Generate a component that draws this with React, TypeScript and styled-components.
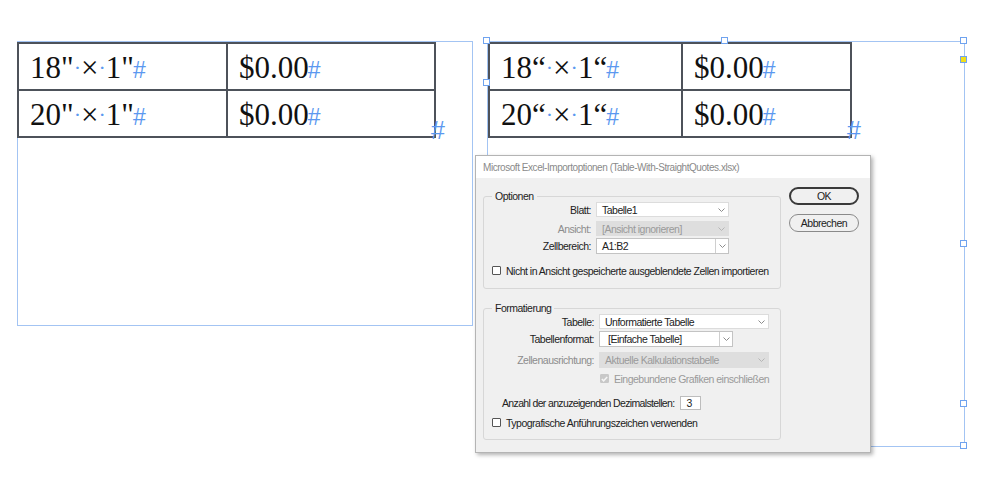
import React from "react";
import styled, { createGlobalStyle, css } from "styled-components";

const GlobalStyle = createGlobalStyle`
  html, body { margin: 0; padding: 0; background: #ffffff; }
  #root { width: 999px; height: 500px; }
`;

const Canvas = styled.div`
  position: relative;
  width: 999px;
  height: 500px;
  overflow: hidden;
  background: #ffffff;
`;

const Frame = styled.div<{ $x: number; $y: number; $w: number; $h: number }>`
  position: absolute;
  left: ${(p) => p.$x}px;
  top: ${(p) => p.$y}px;
  width: ${(p) => p.$w}px;
  height: ${(p) => p.$h}px;
  box-sizing: border-box;
  border: 1px solid #a3c4f3;
`;

const Handle = styled.div<{ $x: number; $y: number; $yellow?: boolean }>`
  position: absolute;
  left: ${(p) => p.$x - 4}px;
  top: ${(p) => p.$y - 4}px;
  width: 7px;
  height: 7px;
  box-sizing: border-box;
  border: 1px solid #6fa3ef;
  background: ${(p) => (p.$yellow ? "#f2df1a" : "#ffffff")};
  z-index: 2;
`;

const CellTable = styled.table<{ $shift?: boolean }>`
  border-collapse: collapse;
  border: 2px solid #4d525a;
  margin: ${(p) => (p.$shift ? "0 0 0 -1px" : "0")};
  font-family: "Liberation Serif", "Times New Roman", serif;
  font-size: 31px;
  color: #111;
`;

const Cell = styled.td<{ $w: number }>`
  width: ${(p) => p.$w}px;
  height: 47px;
  box-sizing: border-box;
  border: 2px solid #4d525a;
  padding: 6px 0 0 11px;
  vertical-align: top;
  line-height: 36px;
  white-space: nowrap;
`;

const Dot = styled.span`
  color: #5b98f0;
  font-size: 22px;
  vertical-align: 3px;
`;

const Mark = styled.span`
  font-family: "Liberation Sans", Arial, sans-serif;
  font-size: 23px;
  color: #5b98f0;
  margin-left: -1px;
`;

const StoryEnd = styled.span<{ $x: number; $y: number }>`
  position: absolute;
  left: ${(p) => p.$x}px;
  top: ${(p) => p.$y}px;
  font-family: "Liberation Sans", Arial, sans-serif;
  font-size: 25px;
  line-height: 25px;
  color: #5b98f0;
`;

/* ---------- Dialog ---------- */

const Dialog = styled.div`
  position: absolute;
  left: 475px;
  top: 155px;
  width: 396px;
  height: 298px;
  box-sizing: border-box;
  border: 1px solid #b4b4b4;
  background: #f0f0f0;
  box-shadow: 2px 2px 4px rgba(0, 0, 0, 0.3);
  font-family: "Liberation Sans", Arial, sans-serif;
  font-size: 10.5px;
  letter-spacing: -0.5px;
  color: #222222;
  z-index: 3;
`;

const TitleBar = styled.div`
  height: 22px;
  background: #ffffff;
  color: #8a8a8a;
  display: flex;
  align-items: center;
  padding-left: 7px;
  font-size: 10px;
  letter-spacing: -0.45px;
`;

const Body = styled.div`
  display: flex;
  align-items: flex-start;
  gap: 8px;
  padding: 12px 10px 0 7px;
`;

const Groups = styled.div`
  display: flex;
  flex-direction: column;
  gap: 13px;
  width: 298px;
`;

const Group = styled.fieldset`
  margin: 0;
  padding: 0 8px 0 8px;
  border: 1px solid #d7d7d7;
  border-radius: 3px;
  min-width: 0;
`;

const Legend = styled.legend`
  padding: 0 3px;
  line-height: 12px;
  color: #222;
`;

const Spacer = styled.div<{ $h: number }>`
  height: ${(p) => p.$h}px;
`;

const FormRow = styled.div<{ $label: number; $top: number; $h: number }>`
  display: grid;
  grid-template-columns: ${(p) => p.$label}px auto;
  column-gap: 5px;
  align-items: center;
  margin-top: ${(p) => p.$top}px;
  height: ${(p) => p.$h}px;
`;

const Label = styled.span<{ $disabled?: boolean }>`
  text-align: right;
  white-space: nowrap;
  color: ${(p) => (p.$disabled ? "#8c8c8c" : "#222")};
`;

const Select = styled.div<{ $w: number; $h: number; $disabled?: boolean; $combo?: boolean }>`
  width: ${(p) => p.$w}px;
  height: ${(p) => p.$h}px;
  box-sizing: border-box;
  display: flex;
  align-items: center;
  padding-left: 5px;
  white-space: nowrap;
  ${(p) =>
    p.$disabled
      ? css`
          background: #dedede;
          border: 1px solid #dedede;
          color: #9a9a9a;
        `
      : css`
          background: #ffffff;
          border: 1px solid ${p.$combo ? "#c3c3c3" : "#dcdcdc"};
          color: #222;
        `}
`;

const SelectText = styled.span<{ $pad?: number }>`
  flex: 1;
  padding-left: ${(p) => p.$pad ?? 0}px;
`;

const Arrow = styled.span<{ $divider?: boolean }>`
  width: 13px;
  height: 100%;
  display: flex;
  align-items: center;
  justify-content: center;
  box-sizing: border-box;
  border-left: ${(p) => (p.$divider ? "1px solid #cfcfcf" : "none")};
`;

const CheckRow = styled.div<{ $top: number; $indent: number; $disabled?: boolean }>`
  display: flex;
  align-items: center;
  gap: 5px;
  margin-top: ${(p) => p.$top}px;
  padding-left: ${(p) => p.$indent}px;
  height: 13px;
  white-space: nowrap;
  color: ${(p) => (p.$disabled ? "#9a9a9a" : "#222")};
`;

const Box = styled.span<{ $checked?: boolean }>`
  width: 9px;
  height: 9px;
  box-sizing: border-box;
  border-radius: 1px;
  display: flex;
  align-items: center;
  justify-content: center;
  ${(p) =>
    p.$checked
      ? css`
          background: #c8c8c8;
          border: 1px solid #c8c8c8;
        `
      : css`
          background: #ffffff;
          border: 1px solid #555;
        `}
`;

const NumberRow = styled.div`
  display: flex;
  align-items: center;
  gap: 6px;
  margin-top: 11px;
  padding-left: 10px;
  height: 14px;
  white-space: nowrap;
  letter-spacing: -0.65px;
`;

const NumberInput = styled.span`
  width: 21px;
  height: 14px;
  box-sizing: border-box;
  border: 1px solid #bdbdbd;
  background: #fff;
  padding-left: 5px;
  display: flex;
  align-items: center;
`;

const Buttons = styled.div`
  display: flex;
  flex-direction: column;
  gap: 9px;
  margin-top: -3px;
`;

const Button = styled.div<{ $primary?: boolean }>`
  width: 70px;
  height: 18px;
  box-sizing: border-box;
  border-radius: 9px;
  display: flex;
  align-items: center;
  justify-content: center;
  background: #f0f0f0;
  border: ${(p) => (p.$primary ? "2px solid #3a3a3a" : "1px solid #8a8a8a")};
  color: #222;
`;

const Chevron = ({ light }: { light?: boolean }) => (
  <svg width="7" height="4" viewBox="0 0 7 4">
    <polyline
      points="0.5,0.5 3.5,3.5 6.5,0.5"
      fill="none"
      stroke={light ? "#b5b5b5" : "#8c8c8c"}
      strokeWidth="1"
    />
  </svg>
);

const Tick = () => (
  <svg width="7" height="6" viewBox="0 0 7 6">
    <polyline points="0.8,3 2.6,4.8 6.2,1" fill="none" stroke="#f5f5f5" strokeWidth="1.5" />
  </svg>
);

type Quote = '"' | "\u201C";

const SizeText = ({ a, q }: { a: string; q: Quote }) => (
  <>
    {a}
    {q}
    <Dot>·</Dot>×<Dot>·</Dot>1{q}
    <Mark>#</Mark>
  </>
);

const Price = () => (
  <>
    $0.00<Mark>#</Mark>
  </>
);

const DataTable = ({ q, w1, w2, shift }: { q: Quote; w1: number; w2: number; shift?: boolean }) => (
  <CellTable $shift={shift}>
    <tbody>
      <tr>
        <Cell $w={w1}>
          <SizeText a="18" q={q} />
        </Cell>
        <Cell $w={w2}>
          <Price />
        </Cell>
      </tr>
      <tr>
        <Cell $w={w1}>
          <SizeText a="20" q={q} />
        </Cell>
        <Cell $w={w2}>
          <Price />
        </Cell>
      </tr>
    </tbody>
  </CellTable>
);

export default function App() {
  return (
    <>
      <GlobalStyle />
      <Canvas>
        <Frame $x={17} $y={41} $w={456} $h={285}>
          <DataTable q='"' w1={209} w2={208} shift />
          <StoryEnd $x={413} $y={76}>#</StoryEnd>
        </Frame>

        <Frame $x={487} $y={41} $w={478} $h={406}>
          <DataTable q={"\u201C"} w1={193} w2={169} />
          <StoryEnd $x={359} $y={76}>#</StoryEnd>
        </Frame>
        <Handle $x={487} $y={41} />
        <Handle $x={725} $y={41} />
        <Handle $x={487} $y={83} />
        <Handle $x={964} $y={41} />
        <Handle $x={964} $y={60} $yellow />
        <Handle $x={964} $y={244} />
        <Handle $x={964} $y={404} />
        <Handle $x={964} $y={446} />

        <Dialog>
          <TitleBar>Microsoft Excel-Importoptionen (Table-With-StraightQuotes.xlsx)</TitleBar>
          <Body>
            <Groups>
              <Group>
                <Legend>Optionen</Legend>
                <FormRow $label={99} $top={0} $h={15}>
                  <Label>Blatt:</Label>
                  <Select $w={133} $h={15}>
                    <SelectText>Tabelle1</SelectText>
                    <Arrow>
                      <Chevron />
                    </Arrow>
                  </Select>
                </FormRow>
                <FormRow $label={99} $top={4} $h={15}>
                  <Label $disabled>Ansicht:</Label>
                  <Select $w={133} $h={15} $disabled>
                    <SelectText>[Ansicht ignorieren]</SelectText>
                    <Arrow>
                      <Chevron light />
                    </Arrow>
                  </Select>
                </FormRow>
                <FormRow $label={99} $top={2} $h={16}>
                  <Label>Zellbereich:</Label>
                  <Select $w={133} $h={16} $combo>
                    <SelectText>A1:B2</SelectText>
                    <Arrow $divider>
                      <Chevron />
                    </Arrow>
                  </Select>
                </FormRow>
                <CheckRow $top={10} $indent={0}>
                  <Box />
                  Nicht in Ansicht gespeicherte ausgeblendete Zellen importieren
                </CheckRow>
                <Spacer $h={11} />
              </Group>

              <Group>
                <Legend>Formatierung</Legend>
                <FormRow $label={102} $top={0} $h={15}>
                  <Label>Tabelle:</Label>
                  <Select $w={170} $h={15}>
                    <SelectText>Unformatierte Tabelle</SelectText>
                    <Arrow>
                      <Chevron />
                    </Arrow>
                  </Select>
                </FormRow>
                <FormRow $label={102} $top={2} $h={16}>
                  <Label>Tabellenformat:</Label>
                  <Select $w={134} $h={16} $combo>
                    <SelectText $pad={3}>[Einfache Tabelle]</SelectText>
                    <Arrow $divider>
                      <Chevron />
                    </Arrow>
                  </Select>
                </FormRow>
                <FormRow $label={102} $top={5} $h={16}>
                  <Label $disabled>Zellenausrichtung:</Label>
                  <Select $w={170} $h={16} $disabled>
                    <SelectText>Aktuelle Kalkulationstabelle</SelectText>
                    <Arrow>
                      <Chevron light />
                    </Arrow>
                  </Select>
                </FormRow>
                <CheckRow $top={4} $indent={108} $disabled>
                  <Box $checked>
                    <Tick />
                  </Box>
                  Eingebundene Grafiken einschließen
                </CheckRow>
                <NumberRow>
                  Anzahl der anzuzeigenden Dezimalstellen:
                  <NumberInput>3</NumberInput>
                </NumberRow>
                <CheckRow $top={6} $indent={0}>
                  <Box />
                  Typografische Anführungszeichen verwenden
                </CheckRow>
                <Spacer $h={10} />
              </Group>
            </Groups>
            <Buttons>
              <Button $primary>OK</Button>
              <Button>Abbrechen</Button>
            </Buttons>
          </Body>
        </Dialog>
      </Canvas>
    </>
  );
}
